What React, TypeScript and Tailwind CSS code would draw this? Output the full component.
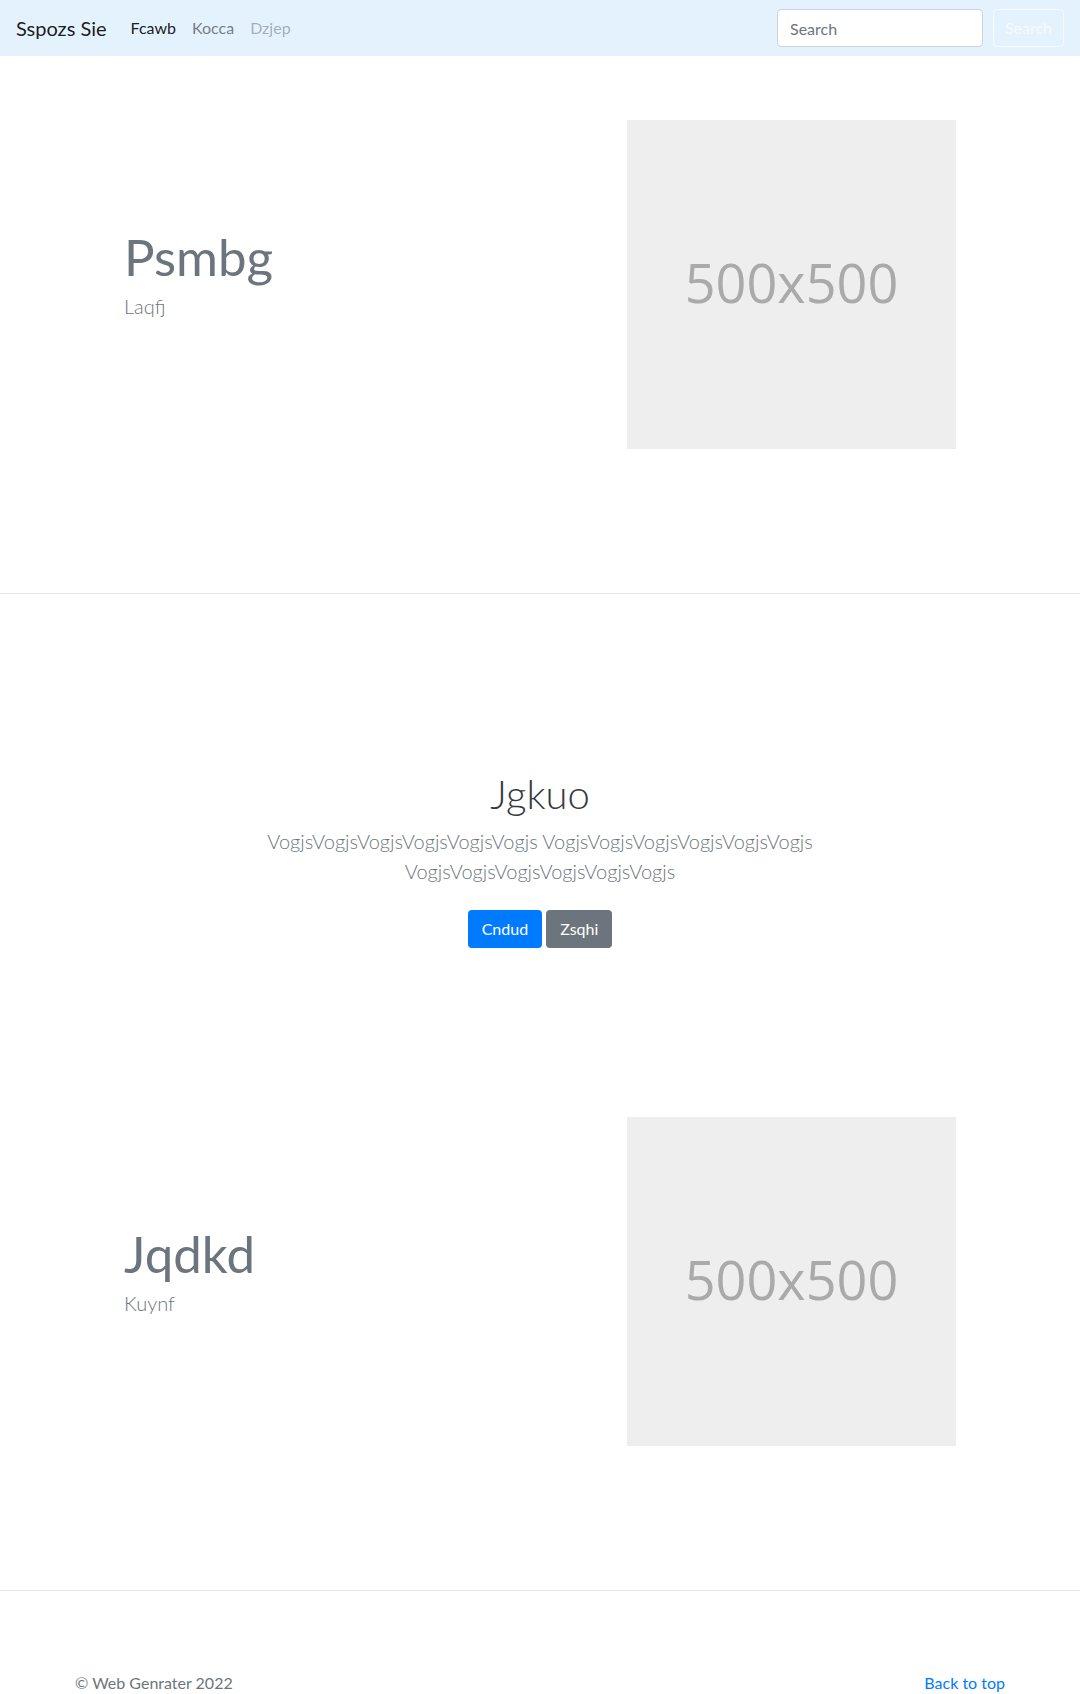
import React from 'react'

const FONT = "font-['Lato','Open_Sans',sans-serif]"

function Placeholder() {
  return (
    <div className="w-[329px] h-[329px] bg-[#eeeeee] flex items-center justify-center pb-[6px]">
      <span className="font-['Open_Sans',sans-serif] text-[54px] text-[#aaaaaa] leading-none">500x500</span>
    </div>
  )
}

function Feature({ title, sub }: { title: string; sub: string }) {
  return (
    <div className="w-[960px] mx-auto px-[15px] flex items-center">
      <div className="w-1/2 pl-[49px] pb-[22px]">
        <h1 className="text-[51px] leading-[1.2] font-normal text-[#6c757d]">{title}</h1>
        <p className="mt-[3px] text-[20px] leading-[1.5] font-light text-[#6c757d]">{sub}</p>
      </div>
      <div className="w-1/2 flex justify-end pr-[49px]">
        <Placeholder />
      </div>
    </div>
  )
}

export default function App() {
  return (
    <div className={`${FONT} bg-white min-h-[1694px] text-[#212529]`}>
      <nav className="h-[56px] bg-[#e3f2fd] flex items-center px-4">
        <a className="text-[20px] text-black/90 mr-4">Sspozs Sie</a>
        <ul className="flex items-center text-[16px]">
          <li className="px-2 text-black/90">Fcawb</li>
          <li className="px-2 text-black/50">Kocca</li>
          <li className="px-2 text-black/30">Dzjep</li>
        </ul>
        <form className="ml-auto flex items-center">
          <input
            placeholder="Search"
            className="w-[206px] h-[38px] rounded-[4px] border border-[#ced4da] bg-white px-3 text-[16px] placeholder:text-[#6c757d] outline-none"
          />
          <button
            type="button"
            className="ml-[10px] w-[71px] h-[38px] rounded-[4px] border border-[#f8f9fa] text-[#f8f9fa] text-[16px]"
          >
            Search
          </button>
        </form>
      </nav>

      <section className="pt-[64px] pb-[144px] border-b border-[#e5e5e5]">
        <Feature title="Psmbg" sub="Laqfj" />
      </section>

      <section className="h-[459px] pt-[176px] text-center">
        <h1 className="text-[40px] leading-[1.2] font-light text-[#343a40]">Jgkuo</h1>
        <p className="max-w-[610px] mx-auto mt-2 text-[20px] leading-[1.5] font-light text-[#6c757d]">
          VogjsVogjsVogjsVogjsVogjsVogjs VogjsVogjsVogjsVogjsVogjsVogjs VogjsVogjsVogjsVogjsVogjsVogjs
        </p>
        <div className="mt-[24px] flex justify-center gap-[4px]">
          <button className="h-[38px] px-[14px] rounded-[4px] bg-[#007bff] text-white text-[16px]">Cndud</button>
          <button className="h-[38px] px-[14px] rounded-[4px] bg-[#6c757d] text-white text-[16px]">Zsqhi</button>
        </div>
      </section>

      <section className="pt-[64px] pb-[144px] border-b border-[#e5e5e5]">
        <Feature title="Jqdkd" sub="Kuynf" />
      </section>

      <footer className="w-[960px] mx-auto px-[15px] pt-[80px] pb-12 flex justify-between text-[16px]">
        <p className="text-[#6c757d]">© Web Genrater 2022</p>
        <a className="text-[#007bff]">Back to top</a>
      </footer>
    </div>
  )
}
